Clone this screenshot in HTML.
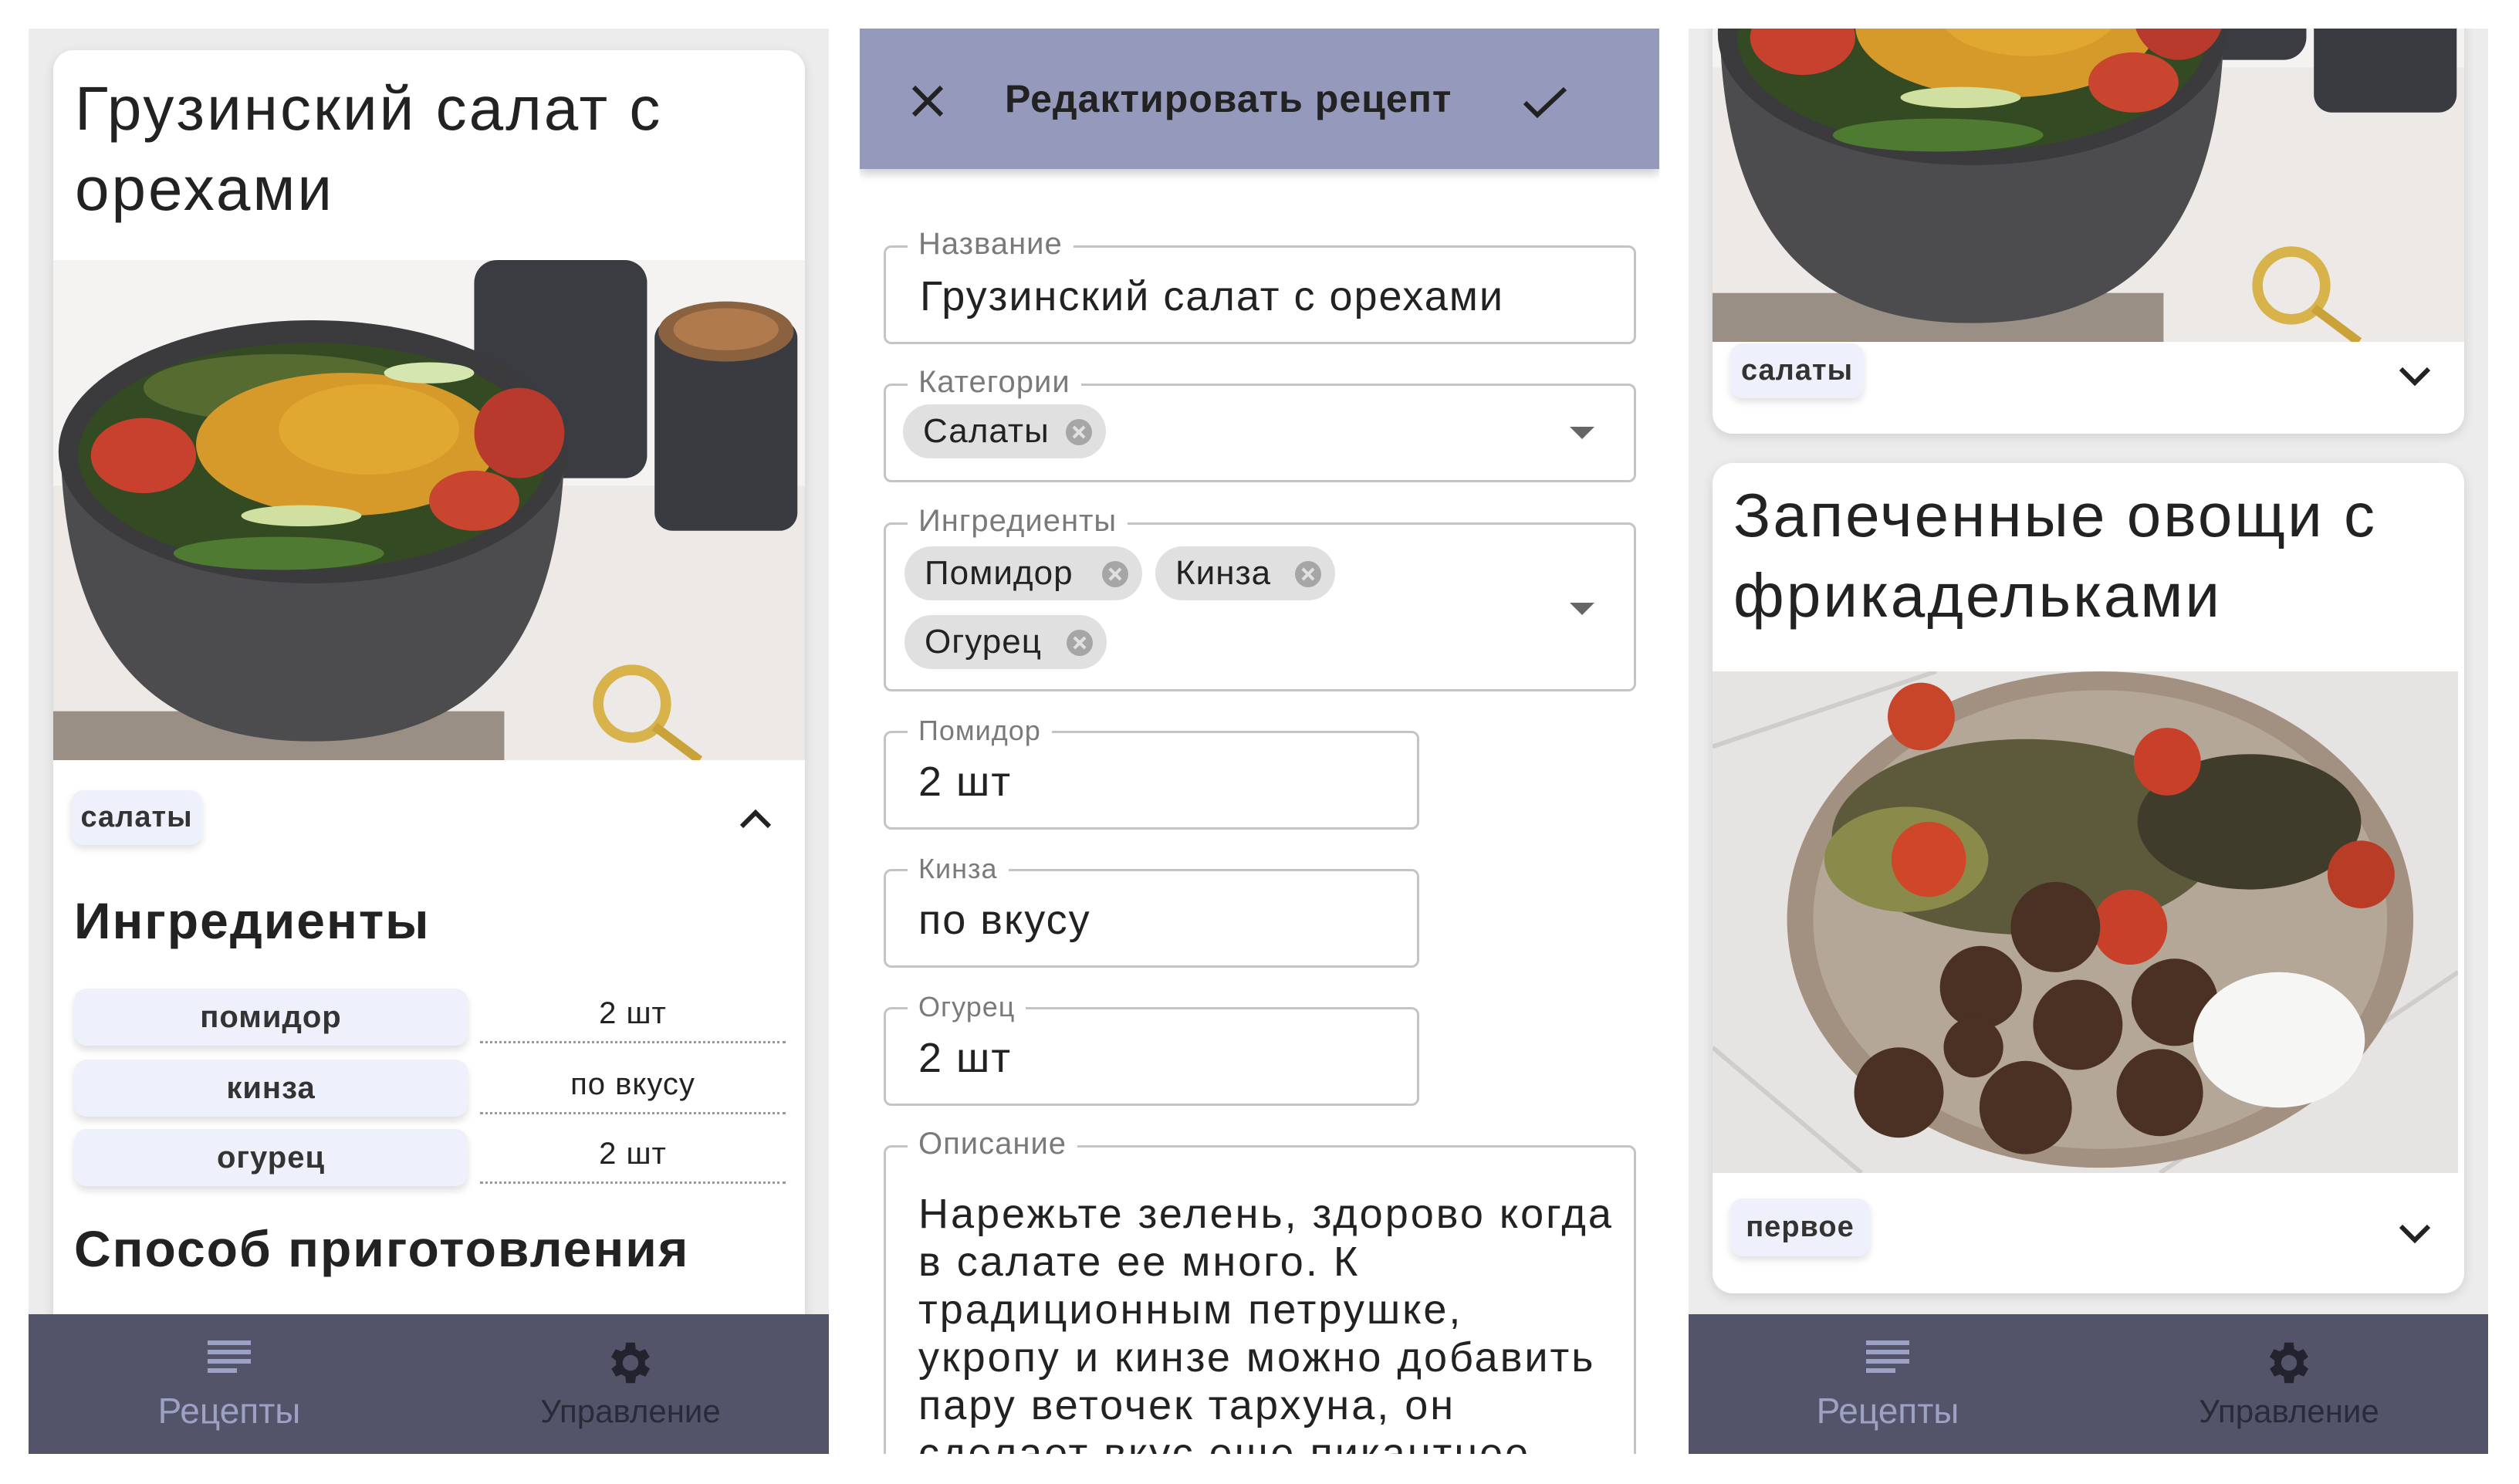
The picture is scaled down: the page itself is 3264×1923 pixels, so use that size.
<!DOCTYPE html>
<html><head><meta charset="utf-8"><style>
*{box-sizing:border-box;margin:0;padding:0}
body{width:3264px;height:1923px;background:#fff;position:relative;overflow:hidden;font-family:"Liberation Sans","DejaVu Sans",sans-serif;color:#1e1e1e}
.abs{position:absolute}
.panel{position:absolute;top:37px;height:1847px;overflow:hidden}
.card{position:absolute;background:#fff;border-radius:26px;overflow:hidden;box-shadow:0 4px 14px rgba(0,0,0,.12)}
.title{position:absolute;font-size:80px;line-height:104px;color:#222;letter-spacing:3px}
.tag{position:absolute;background:#eef1fb;border-radius:16px;box-shadow:0 5px 10px rgba(0,0,0,.12);font-size:38px;font-weight:bold;color:#333;display:flex;align-items:center;justify-content:center;letter-spacing:1px}
.nav{position:absolute;left:0;right:0;bottom:0;height:181px;background:#535469}
.nav .lbl{position:absolute;top:98px;font-size:46px;transform:translateX(-50%);white-space:nowrap}
.pill{position:absolute;left:96px;width:510px;height:74px;background:#eef1fb;border-radius:16px;box-shadow:0 6px 10px rgba(0,0,0,.13);font-size:40px;font-weight:bold;color:#333;display:flex;align-items:center;justify-content:center;letter-spacing:1px}
.val{position:absolute;left:622px;width:396px;height:74px;border-bottom:3px dotted #999;font-size:40px;display:flex;align-items:center;justify-content:center;color:#222;letter-spacing:1px}
.fld{position:absolute;border:3px solid #c4c4c4;border-radius:10px}
.fl{position:absolute;background:#fff;padding:0 14px;color:#7a7a7a;font-size:40px;line-height:40px;letter-spacing:1px}
.fv{position:absolute;font-size:54px;color:#222;letter-spacing:2px}
.chip{position:absolute;height:70px;background:#e0e0e0;border-radius:35px;font-size:44px;color:#222;display:flex;align-items:center;padding-left:26px;letter-spacing:1px}
.chip i{position:absolute;right:18px;top:19px;width:34px;height:34px;border-radius:50%;background:#a6a6a6}
.chip i:before,.chip i:after{content:"";position:absolute;left:7px;top:15px;width:20px;height:4px;background:#e0e0e0;transform:rotate(45deg)}
.chip i:after{transform:rotate(-45deg)}
.tri{position:absolute;width:0;height:0;border-left:16px solid transparent;border-right:16px solid transparent;border-top:16px solid #666}
</style></head><body>

<svg width="0" height="0" style="position:absolute">
<defs>
<symbol id="salad" viewBox="0 0 1000 665" preserveAspectRatio="none">
<rect width="1000" height="665" fill="#ece9e6"/>
<rect x="0" y="0" width="1000" height="300" fill="#f4f3f2"/>
<rect x="0" y="600" width="600" height="65" fill="#9a8f84"/>
<rect x="560" y="0" width="230" height="290" rx="30" fill="#3a3c41"/>
<rect x="800" y="80" width="190" height="280" rx="24" fill="#393b40"/>
<ellipse cx="895" cy="95" rx="90" ry="40" fill="#8a6240"/>
<ellipse cx="895" cy="92" rx="70" ry="28" fill="#b07a4c"/>
<circle cx="770" cy="590" r="45" fill="none" stroke="#d8b24a" stroke-width="14"/>
<line x1="800" y1="620" x2="860" y2="665" stroke="#c9a23a" stroke-width="12"/>
<path d="M10 260 C 20 540, 150 640, 345 640 C 540 640, 670 540, 680 260 Z" fill="#4c4c4e"/>
<ellipse cx="345" cy="255" rx="338" ry="175" fill="#3b3b3d"/>
<ellipse cx="345" cy="260" rx="312" ry="150" fill="#344a23"/>
<ellipse cx="300" cy="170" rx="180" ry="45" fill="#556b2f"/>
<ellipse cx="390" cy="245" rx="200" ry="95" fill="#d69a2a"/>
<ellipse cx="420" cy="225" rx="120" ry="60" fill="#e0a830"/>
<ellipse cx="120" cy="260" rx="70" ry="50" fill="#c8402e"/>
<ellipse cx="620" cy="230" rx="60" ry="60" fill="#b83a2c"/>
<ellipse cx="560" cy="320" rx="60" ry="40" fill="#c9452f"/>
<ellipse cx="300" cy="390" rx="140" ry="22" fill="#4f7a32"/>
<ellipse cx="330" cy="340" rx="80" ry="14" fill="#cfe0a0"/>
<ellipse cx="500" cy="150" rx="60" ry="14" fill="#d6e6b0"/>
</symbol>
<symbol id="meat" viewBox="0 0 1000 667" preserveAspectRatio="none">
<rect width="1000" height="667" fill="#e6e4e2"/>
<path d="M0 100 L300 0 M600 667 L1000 400 M0 500 L200 667" stroke="#cfcdcb" stroke-width="6"/>
<ellipse cx="520" cy="330" rx="420" ry="330" fill="#a29180"/>
<ellipse cx="520" cy="330" rx="385" ry="305" fill="#b5a797"/>
<ellipse cx="420" cy="220" rx="260" ry="130" fill="#5c5a3a"/>
<ellipse cx="720" cy="200" rx="150" ry="90" fill="#3f3c2c"/>
<ellipse cx="260" cy="250" rx="110" ry="70" fill="#8a8a4a"/>
<circle cx="280" cy="60" r="45" fill="#c9452a"/>
<circle cx="290" cy="250" r="50" fill="#d04628"/>
<circle cx="610" cy="120" r="45" fill="#c8402a"/>
<circle cx="560" cy="340" r="50" fill="#c8402a"/>
<circle cx="870" cy="270" r="45" fill="#b83c26"/>
<g fill="#4b3024">
<circle cx="460" cy="340" r="60"/><circle cx="360" cy="420" r="55"/><circle cx="490" cy="470" r="60"/>
<circle cx="620" cy="440" r="58"/><circle cx="250" cy="560" r="60"/><circle cx="420" cy="580" r="62"/>
<circle cx="600" cy="560" r="58"/><circle cx="730" cy="470" r="55"/><circle cx="350" cy="500" r="40"/>
</g>
<ellipse cx="760" cy="490" rx="115" ry="90" fill="#f6f6f4"/>
</symbol>
<symbol id="gear" viewBox="0 0 24 24"><path d="M19.4 13a7.5 7.5 0 0 0 0-2l2.1-1.6-2-3.5-2.5 1a7 7 0 0 0-1.7-1L15 3h-4l-.4 2.9a7 7 0 0 0-1.7 1l-2.5-1-2 3.5L6.6 11a7.5 7.5 0 0 0 0 2l-2.1 1.6 2 3.5 2.5-1a7 7 0 0 0 1.7 1L11 21h4l.4-2.9a7 7 0 0 0 1.7-1l2.5 1 2-3.5zM13 15.5A3.5 3.5 0 1 1 13 8.5a3.5 3.5 0 0 1 0 7z" transform="translate(-1 0)"/></symbol>
</defs></svg>

<!-- PANEL 1 -->
<div class="panel" style="left:37px;width:1037px;background:#ececec">
  <div class="card" style="left:32px;top:28px;width:974px;height:1700px">
    <div class="title" style="left:28px;top:24px">Грузинский салат с<br>орехами</div>
    <svg class="abs" style="left:0;top:272px" width="974" height="648"><use href="#salad" width="974" height="648"/></svg>
    <div class="tag" style="left:23px;top:959px;width:170px;height:71px">салаты</div>
    <svg class="abs" style="left:888px;top:982px" width="44" height="30"><polyline points="4,24 22,6 40,24" fill="none" stroke="#222" stroke-width="6"/></svg>
    <div class="abs" style="left:27px;top:1090px;font-size:66px;font-weight:bold;letter-spacing:2px;color:#222">Ингредиенты</div>
    <div class="pill" style="left:27px;top:1216px">помидор</div><div class="val" style="left:553px;top:1213px">2 шт</div>
    <div class="pill" style="left:27px;top:1308px">кинза</div><div class="val" style="left:553px;top:1305px">по вкусу</div>
    <div class="pill" style="left:27px;top:1398px">огурец</div><div class="val" style="left:553px;top:1395px">2 шт</div>
    <div class="abs" style="left:27px;top:1515px;font-size:66px;font-weight:bold;letter-spacing:2px;color:#222">Способ приготовления</div>
  </div>
  <div class="nav">
    <svg class="abs" style="left:232px;top:34px" width="56" height="48"><g fill="#9da1c4"><rect y="0" width="56" height="6"/><rect y="12" width="56" height="6"/><rect y="24" width="56" height="6"/><rect y="36" width="38" height="6"/></g></svg>
    <div class="lbl" style="left:260px;color:#9da1c4">Рецепты</div>
    <svg class="abs" style="left:745px;top:28px" width="70" height="70" fill="#22232f"><use href="#gear"/></svg>
    <div class="lbl" style="left:780px;color:#2a2b3a;font-size:42px;top:102px">Управление</div>
  </div>
</div>

<!-- PANEL 2 -->
<div class="panel" style="left:1114px;width:1036px;background:#fff">
  <div class="abs" style="left:0;top:0;width:1036px;height:182px;background:#9599bb;box-shadow:0 6px 12px rgba(0,0,0,.2)"></div>
  <svg class="abs" style="left:66px;top:72px" width="44" height="44"><path d="M4 4L40 40M40 4L4 40" stroke="#222" stroke-width="6"/></svg>
  <div class="abs" style="left:188px;top:62px;font-size:50px;font-weight:bold;color:#222;letter-spacing:1px">Редактировать рецепт</div>
  <svg class="abs" style="left:858px;top:74px" width="60" height="44"><polyline points="4,22 20,38 56,4" fill="none" stroke="#222" stroke-width="6"/></svg>

  <div class="fld" style="left:31px;top:281px;width:975px;height:128px"></div>
  <div class="fl" style="left:62px;top:259px">Название</div>
  <div class="fv" style="left:78px;top:316px">Грузинский салат с орехами</div>

  <div class="fld" style="left:31px;top:460px;width:975px;height:128px"></div>
  <div class="fl" style="left:62px;top:438px">Категории</div>
  <div class="chip" style="left:56px;top:487px;width:263px">Салаты<i></i></div>
  <div class="tri" style="left:920px;top:516px"></div>

  <div class="fld" style="left:31px;top:640px;width:975px;height:219px"></div>
  <div class="fl" style="left:62px;top:618px">Ингредиенты</div>
  <div class="chip" style="left:58px;top:671px;width:308px">Помидор<i></i></div>
  <div class="chip" style="left:383px;top:671px;width:233px">Кинза<i></i></div>
  <div class="chip" style="left:58px;top:760px;width:262px">Огурец<i></i></div>
  <div class="tri" style="left:920px;top:744px"></div>

  <div class="fld" style="left:31px;top:910px;width:694px;height:128px"></div>
  <div class="fl" style="left:62px;top:890px;font-size:36px">Помидор</div>
  <div class="fv" style="left:76px;top:945px">2 шт</div>

  <div class="fld" style="left:31px;top:1089px;width:694px;height:128px"></div>
  <div class="fl" style="left:62px;top:1069px;font-size:36px">Кинза</div>
  <div class="fv" style="left:76px;top:1124px">по вкусу</div>

  <div class="fld" style="left:31px;top:1268px;width:694px;height:128px"></div>
  <div class="fl" style="left:62px;top:1248px;font-size:36px">Огурец</div>
  <div class="fv" style="left:76px;top:1303px">2 шт</div>

  <div class="fld" style="left:31px;top:1447px;width:975px;height:440px"></div>
  <div class="fl" style="left:62px;top:1425px">Описание</div>
  <div class="fv" style="left:76px;top:1505px;line-height:62px;width:940px;white-space:nowrap;letter-spacing:3px">Нарежьте зелень, здорово когда<br>в салате ее много. К<br>традиционным петрушке,<br>укропу и кинзе можно добавить<br>пару веточек тархуна, он<br>сделает вкус еще пикантнее</div>
</div>

<!-- PANEL 3 -->
<div class="panel" style="left:2188px;width:1036px;background:#ececec">
  <div class="card" style="left:31px;top:-40px;width:974px;height:565px">
    <svg class="abs" style="left:0;top:-202px" width="974" height="648"><use href="#salad" width="974" height="648"/></svg>
    <div class="tag" style="left:23px;top:448px;width:173px;height:71px">салаты</div>
    <svg class="abs" style="left:888px;top:475px" width="44" height="30"><polyline points="4,6 22,24 40,6" fill="none" stroke="#222" stroke-width="6"/></svg>
  </div>
  <div class="card" style="left:31px;top:563px;width:974px;height:1076px">
    <div class="title" style="left:27px;top:16px">Запеченные овощи с<br>фрикадельками</div>
    <svg class="abs" style="left:0;top:270px" width="966" height="650"><use href="#meat" width="966" height="650"/></svg>
    <div class="tag" style="left:23px;top:953px;width:181px;height:75px">первое</div>
    <svg class="abs" style="left:888px;top:983px" width="44" height="30"><polyline points="4,6 22,24 40,6" fill="none" stroke="#222" stroke-width="6"/></svg>
  </div>
  <div class="nav">
    <svg class="abs" style="left:230px;top:34px" width="56" height="48"><g fill="#9da1c4"><rect y="0" width="56" height="6"/><rect y="12" width="56" height="6"/><rect y="24" width="56" height="6"/><rect y="36" width="38" height="6"/></g></svg>
    <div class="lbl" style="left:258px;color:#9da1c4">Рецепты</div>
    <svg class="abs" style="left:743px;top:28px" width="70" height="70" fill="#22232f"><use href="#gear"/></svg>
    <div class="lbl" style="left:778px;color:#2a2b3a;font-size:42px;top:102px">Управление</div>
  </div>
</div>
</body></html>
